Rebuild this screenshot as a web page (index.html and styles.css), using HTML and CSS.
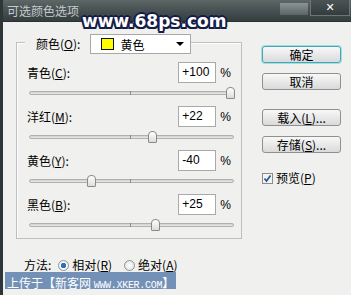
FILE: index.html
```html
<!DOCTYPE html>
<html lang="zh">
<head>
    <meta charset="UTF-8">
    <title>可选颜色选项</title>
    <link rel="stylesheet" href="styles.css">
</head>
<body>
    <div class="window">
        <div class="titlebar">
            <span class="title">可选颜色选项</span>
            <span class="tb-btn"></span>
            <span class="close">✕</span>
        </div>
        <div class="client">
            <div class="group">
                <div class="legend">
                    <span class="legend-label">颜色(<u>O</u>):</span>
                    <div class="select">
                        <span class="swatch"></span>
                        <span class="select-text">黄色</span>
                        <span class="caret"></span>
                    </div>
                </div>
                <div class="row">
                    <div class="field"><span class="label">青色(<u>C</u>):</span><span class="num">+100</span><span class="pct">%</span></div>
                    <div class="slider"><span class="tick"></span><span class="thumb" style="left: 196px"></span></div>
                </div>
                <div class="row">
                    <div class="field"><span class="label">洋红(<u>M</u>):</span><span class="num">+22</span><span class="pct">%</span></div>
                    <div class="slider"><span class="tick"></span><span class="thumb" style="left: 118px"></span></div>
                </div>
                <div class="row">
                    <div class="field"><span class="label">黄色(<u>Y</u>):</span><span class="num">-40</span><span class="pct">%</span></div>
                    <div class="slider"><span class="tick"></span><span class="thumb" style="left: 57px"></span></div>
                </div>
                <div class="row">
                    <div class="field"><span class="label">黑色(<u>B</u>):</span><span class="num">+25</span><span class="pct">%</span></div>
                    <div class="slider"><span class="tick"></span><span class="thumb" style="left: 121px"></span></div>
                </div>
            </div>
            <div class="buttons">
                <button class="btn btn-default">确定</button>
                <button class="btn">取消</button>
                <button class="btn btn-gap">载入(<u>L</u>)...</button>
                <button class="btn">存储(<u>S</u>)...</button>
                <label class="check">
                    <svg width="11" height="11" viewBox="0 0 11 11">
                        <rect x="0.5" y="0.5" width="10" height="10" fill="#f4f4f4" stroke="#8c8c8c"/>
                        <path d="M2.5 5.5 L4.5 8 L8.5 2.5" fill="none" stroke="#2a5a9e" stroke-width="1.8"/>
                    </svg>
                    <span>预览(<u>P</u>)</span>
                </label>
            </div>
        </div>
        <div class="method">
            <span class="method-label">方法:</span>
            <span class="radio radio-on"></span><span class="radio-text">相对(<u>R</u>)</span>
            <span class="radio"></span><span class="radio-text">绝对(<u>A</u>)</span>
        </div>
        <div class="credit">上传于【新客网 <span class="credit-url">WWW.XKER.COM</span>】</div>
    </div>
    <div class="watermark">www.68ps.com</div>
</body>
</html>
```
FILE: styles.css
```css
* {
    box-sizing: border-box;
}
body {
    margin: 0;
    font-family: "Noto Sans CJK SC", "Liberation Sans", sans-serif;
    font-size: 12px;
    color: #000;
    background: #f0f0ee;
}
.window {
    position: relative;
    width: 351px;
    height: 295px;
    border-left: 3px solid #2f3638;
    background: #f0f0ee;
    overflow: hidden;
}
.titlebar {
    display: flex;
    height: 22px;
    background: linear-gradient(#5d6766, #434c4e 60%, #353d3f);
    border-bottom: 1px solid #2a3032;
}
.title {
    align-self: center;
    padding-left: 4px;
    color: #c3cbcb;
    font-size: 12px;
    line-height: 14px;
}
.tb-btn {
    width: 28px;
    height: 12px;
    margin: 3px 0 0 auto;
    background: linear-gradient(#8a9493, #5b6566);
}
.close {
    width: 40px;
    height: 16px;
    margin: 0 1px 0 2px;
    background: linear-gradient(#4a5355, #353c3e);
    border: 1px solid #6d7677;
    border-top: none;
    color: #fff;
    font-family: "DejaVu Sans", sans-serif;
    font-weight: bold;
    font-size: 11px;
    line-height: 15px;
    text-align: center;
}
.client {
    display: flex;
    padding-left: 13px;
}
.group {
    width: 226px;
    margin-top: 20px;
    border: 1px solid #bfbfbf;
    box-shadow: inset 1px 1px 0 #fff;
}
.legend {
    display: flex;
    align-items: center;
    height: 20px;
    margin: -9px 0 0 8px;
}
.legend-label {
    background: #f0f0ee;
    padding: 0 10px 0 11px;
    line-height: 20px;
}
.select {
    display: flex;
    align-items: center;
    width: 101px;
    height: 20px;
    background: #fff;
    border: 1px solid #a8a8a8;
}
.swatch {
    width: 13px;
    height: 12px;
    margin-left: 10px;
    background: #ffff00;
    border: 1px solid #111;
}
.select-text {
    margin-left: 6px;
}
.caret {
    margin: 0 6px 0 auto;
    border-left: 4px solid transparent;
    border-right: 4px solid transparent;
    border-top: 4px solid #000;
}
.row {
    height: 44px;
}
.legend + .row {
    margin-top: 8px;
}
.field {
    display: flex;
    align-items: center;
    height: 21px;
    padding: 0 10px;
}
.label {
    flex: 1;
}
.num {
    width: 38px;
    height: 21px;
    padding-left: 3px;
    background: #fff;
    border: 1px solid #a9a9a9;
    font-family: "Liberation Sans", sans-serif;
    font-size: 12px;
    line-height: 19px;
}
.pct {
    margin-left: 4px;
    font-family: "Liberation Sans", sans-serif;
}
.slider {
    position: relative;
    height: 4px;
    margin: 8px 7px 0 12px;
    background: linear-gradient(#cfcfcf, #ebebeb);
    border: 1px solid #b0b0b0;
    border-radius: 2px;
}
.tick {
    position: absolute;
    left: 100px;
    top: -1px;
    width: 1px;
    height: 4px;
    background: #8c8c8c;
}
.thumb {
    position: absolute;
    top: -5px;
    width: 9px;
    height: 12px;
    background: linear-gradient(#ffffff, #dcdcdc);
    border: 1px solid #8a8a8a;
    border-radius: 4px 4px 1px 1px;
}
.buttons {
    display: flex;
    flex-direction: column;
    margin: 24px 0 0 20px;
}
.btn {
    width: 79px;
    height: 17px;
    margin: 0 0 10px;
    padding: 0;
    background: linear-gradient(#f8f8f8, #dadada);
    border: 1px solid #8f9090;
    border-radius: 3px;
    font-family: "Noto Sans CJK SC", sans-serif;
    font-size: 12px;
    line-height: 14px;
    color: #000;
}
.btn-default {
    border-color: #3fa9b7;
    box-shadow: 0 0 0 1px #a7dbe2;
}
.btn-gap {
    margin-top: 9px;
}
.check {
    display: flex;
    align-items: center;
    gap: 3px;
    margin-top: 9px;
    line-height: 12px;
}
.method {
    display: flex;
    align-items: center;
    height: 12px;
    margin-top: 20px;
    padding-left: 21px;
    line-height: 12px;
}
.method-label {
    margin-right: 7px;
}
.radio {
    width: 11px;
    height: 11px;
    margin-right: 3px;
    border-radius: 50%;
    border: 1px solid #8e9496;
    background: radial-gradient(#ffffff, #d9dcdd);
}
.radio-on {
    background: radial-gradient(circle, #2f6fb3 0 2.5px, #ffffff 3px, #d9dcdd);
}
.radio-text {
    margin-right: 12px;
}
.credit {
    width: fit-content;
    height: 17px;
    margin: 1px 0 0 2px;
    padding: 5px 2px 0;
    background: #7391b6;
    color: #fff;
    font-size: 12px;
    line-height: 11px;
    white-space: nowrap;
}
.credit-url {
    font-family: "Liberation Mono", monospace;
    font-size: 10px;
    letter-spacing: -0.3px;
}
.watermark {
    position: absolute;
    left: 82px;
    top: 11px;
    color: #fff;
    font-family: "DejaVu Sans", sans-serif;
    font-weight: bold;
    font-size: 17px;
    line-height: 20px;
    text-shadow: 2px 0 0 #161c48, -2px 0 0 #161c48, 0 2px 0 #161c48, 0 -2px 0 #161c48,
        1.5px 1.5px 0 #161c48, -1.5px 1.5px 0 #161c48, 1.5px -1.5px 0 #161c48, -1.5px -1.5px 0 #161c48;
}
```
